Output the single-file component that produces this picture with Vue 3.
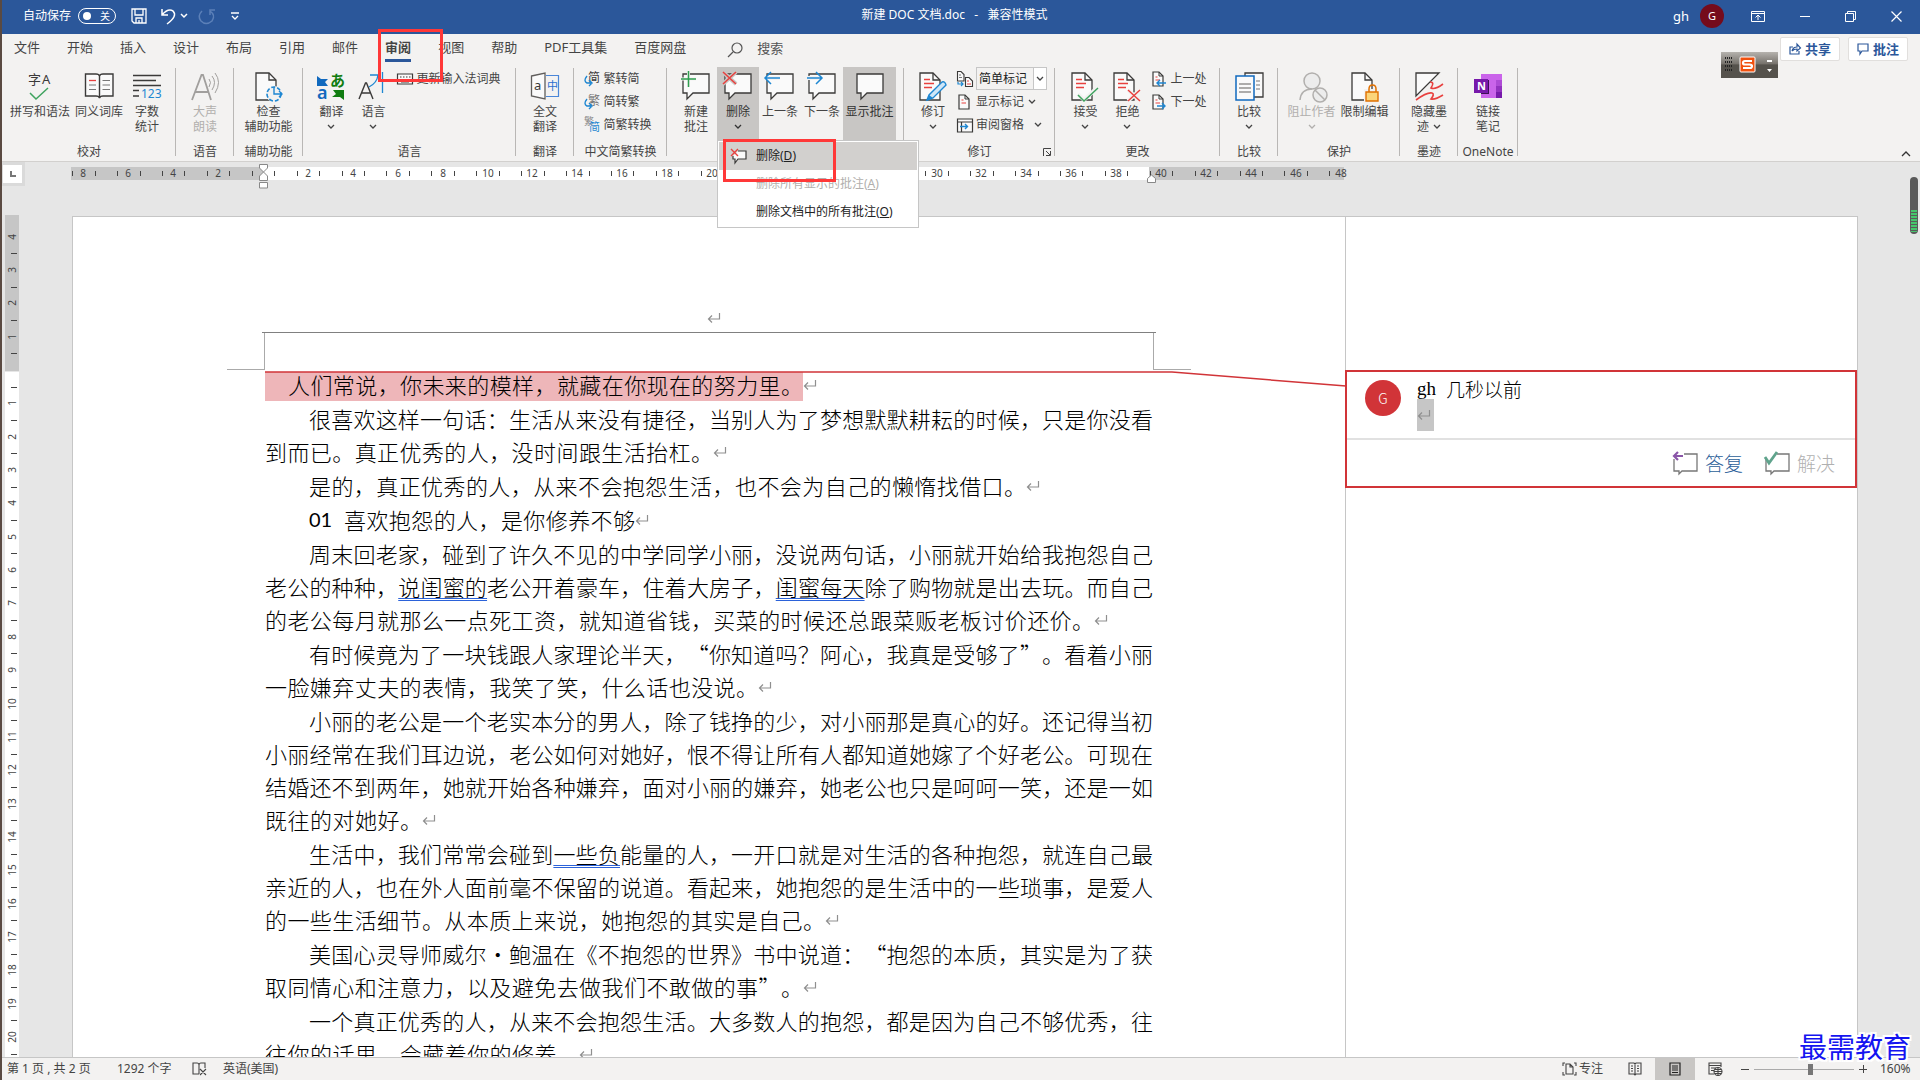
<script setup>
import { ref } from 'vue'

const tabs = ['文件', '开始', '插入', '设计', '布局', '引用', '邮件', '审阅', '视图', '帮助', 'PDF工具集', '百度网盘']
const activeTab = ref('审阅')
const markup = ref('简单标记')
const zoom = ref(57)

const bubble = '<path d="M1 2H27V21H11L5 27V21H1Z" fill="#fafafa" stroke="#3b3a39" stroke-width="1.3"/>'
const sheet = '<path d="M1 1H14L21 8V28H1Z" fill="#fafafa" stroke="#3b3a39" stroke-width="1.3"/><path d="M14 1V8H21" fill="none" stroke="#3b3a39" stroke-width="1.3"/>'
const redLines = '<path d="M5 7.500H11M5 11.500H15M5 15.500H13" stroke="#e8413f" stroke-width="1.3"/>'
const miniSheet = '<path d="M2 1H8L12 5V15H2Z" fill="#fafafa" stroke="#3b3a39" stroke-width="1.2"/><path d="M8 1V5H12" fill="none" stroke="#3b3a39"/><path d="M4.500 6H6.500M4.500 9H9" stroke="#e8413f" stroke-width="1.2"/>'

const icons = {
  spell: '<text x="2" y="12" font-size="13" fill="#3b3a39">字</text><text x="16" y="12" font-size="13" fill="#3b3a39">A</text><path d="M4 21L10 27L22 16" fill="none" stroke="#3fa35f" stroke-width="1.5"/>',
  book: '<path d="M0.500 2H11Q14 2 14.500 4Q15 2 18 2H28V24H18Q15 24 14.500 26Q14 24 11 24H0.500ZM14.500 4V25" fill="#fafafa" stroke="#3b3a39" stroke-width="1.4"/><path d="M17.500 8.500H25M17.500 13H25M17.500 17.500H25M4 13H11M4 17.500H11" stroke="#777"/><path d="M4 8.500H11" stroke="#e8413f" stroke-width="1.3"/>',
  count: '<path d="M0 3.500H28M0 8.500H23M0 13.500H28M0 18.500H6M0 24H6" stroke="#3b3a39" stroke-width="1.3"/><text x="8" y="26" font-size="12" fill="#1e87d2">123</text>',
  speak: '<path d="M1 28L10.500 3H12L20 28M4 20H17.500" fill="none" stroke="#a19f9d" stroke-width="1.8"/><path d="M18 7Q21 10 18 15M21 4Q26 10 21 18M24 1Q31 10 24 21" fill="none" stroke="#a19f9d"/>',
  access: sheet + '<circle cx="19" cy="22" r="8" fill="#f3f2f1"/><circle cx="19" cy="22" r="7" fill="none" stroke="#1e87d2" stroke-width="1.6" stroke-dasharray="4 2"/><path d="M19 15V22H27M24 19L27 22L24 25" fill="none" stroke="#1e87d2" stroke-width="1.4"/>',
  translate: '<path d="M0 4L4 7H11L8 10L11 14H0Z" fill="#1069be"/><text x="13" y="14" font-size="15" font-weight="700" fill="#107c10">あ</text><text x="0" y="27" font-size="18" font-weight="600" fill="#1069be">a</text><path d="M16 18H27V28L23 25H15L19 22Z" fill="#107c10"/>',
  lang: '<path d="M0 27L6.500 11H7.500L14 27M2.500 21H11.500" fill="none" stroke="#3b3a39" stroke-width="1.4"/><path d="M11 3H19Q18 11 10 15M23.500 0V21M23.500 9H27" fill="none" stroke="#1e87d2" stroke-width="1.3"/>',
  fulltrans: '<path d="M0.500 4L14 1V27L0.500 24Z" fill="#fafafa" stroke="#605e5c" stroke-width="1.3"/><path d="M15 3.500H27.500V24.500H15" fill="none" stroke="#4a86d8" stroke-width="1.2"/><text x="3" y="18" font-size="13" fill="#3b3a39">a</text><text x="16" y="18" font-size="11" fill="#2b6fd0">中</text>',
  newC: bubble + '<path d="M-1 7H14M6.500 0V15" stroke="#f3f2f1" stroke-width="3"/><path d="M-1 7H14M6.500 -1V15" stroke="#2e9e4f" stroke-width="1.5"/>',
  delC: bubble + '<path d="M-1 0L12 12M12 0L-1 12" stroke="#c8c6c4" stroke-width="4"/><path d="M-1 0L12 12M12 0L-1 12" stroke="#e8413f" stroke-width="1.6"/>',
  prevC: bubble + '<path d="M-1 6H14" stroke="#f3f2f1" stroke-width="4"/><path d="M14 6H-1M5 0L-1 6L5 12" fill="none" stroke="#1e87d2" stroke-width="1.5"/>',
  nextC: bubble + '<path d="M-1 6H14" stroke="#f3f2f1" stroke-width="4"/><path d="M-1 6H14M8 0L14 6L8 12" fill="none" stroke="#1e87d2" stroke-width="1.5"/>',
  showC: bubble,
  track: sheet + redLines + '<path d="M8 28L10 23L23 10Q26 9 27 13L14 26Z" fill="#cfe6f7" stroke="#1e87d2" stroke-width="1.4"/><path d="M8 29L10 23L14 26Z" fill="#1e87d2"/>',
  accept: sheet + redLines + '<path d="M7 22L13 28L27 15" fill="none" stroke="#f3f2f1" stroke-width="4"/><path d="M7 23L13 29L27 16" fill="none" stroke="#3fa35f" stroke-width="1.5"/>',
  reject: sheet + redLines + '<path d="M15 18L27 29M27 18L15 29" stroke="#f3f2f1" stroke-width="4"/><path d="M15 18L27 29M27 18L15 29" stroke="#e8413f" stroke-width="1.5"/>',
  compare: '<path d="M10 1H28V25H10Z" fill="#fafafa" stroke="#3b3a39" stroke-width="1.3"/><path d="M21 9H25M21 13H25M21 17H25" stroke="#777"/><path d="M1 4H19V28H1Z" fill="#fafafa" stroke="#1069be" stroke-width="1.5"/><path d="M4 12H16M4 16H16M4 20H16" stroke="#605e5c" stroke-width="1.2"/>',
  block: '<circle cx="14" cy="9" r="8" fill="#ececec" stroke="#b1afad" stroke-width="1.5"/><path d="M2 28Q3 17 14 17" fill="none" stroke="#b1afad" stroke-width="1.5"/><circle cx="22" cy="23" r="7" fill="#ececec" stroke="#b1afad" stroke-width="1.5"/><path d="M17 18L27 28" stroke="#b1afad" stroke-width="1.5"/>',
  lock: sheet + '<path d="M13 17H30V31H13Z" fill="#f3f2f1"/><path d="M18 20V17Q18 13 21.500 13Q25 13 25 17V20" fill="none" stroke="#e07000" stroke-width="1.5"/><path d="M15 20H27V29H15Z" fill="#fbd57a" stroke="#e07000" stroke-width="1.4"/>',
  ink: '<path d="M1 1H24L1 24Z" fill="#fafafa" stroke="#3b3a39" stroke-width="1.3"/><path d="M1 28Q12 20 17 21Q20 22 16 27Q20 28 28 23M15 10Q20 10 16 16Q20 18 28 12" fill="none" stroke="#e8413f" stroke-width="1.6"/>',
  onenote: '<path d="M7 2H28V26H7Z" fill="#ca64ea"/><path d="M22 8H28V14H22Z" fill="#ae4bd5"/><path d="M22 14H28V20H22Z" fill="#9332bf"/><path d="M22 20H28V26H22Z" fill="#7719aa"/><path d="M1 8H15V22H7V21H1Z" fill="#3d1056"/><rect y="7" width="14" height="14" fill="#7719aa"/><text x="3" y="18" font-size="11" font-weight="700" fill="#fff">N</text>',
  keyboard: '<path d="M0.500 3H15.500V13H0.500Z" fill="#fafafa" stroke="#3b3a39" stroke-width="1.2"/><path d="M3 6H14M3 8.500H14" stroke="#3b3a39" stroke-dasharray="1.500 1.500"/><path d="M4 11H12" stroke="#3b3a39"/>',
  toSimp: '<text x="4" y="11" font-size="12" fill="#3b3a39">简</text><path d="M3 5Q-1 10 3 12H7M5 9L8 12L5 15" fill="none" stroke="#1e87d2" stroke-width="1.4"/>',
  toTrad: '<text x="4" y="11" font-size="12" fill="#777">繁</text><path d="M3 5Q-1 10 3 12H7M5 9L8 12L5 15" fill="none" stroke="#1e87d2" stroke-width="1.4"/>',
  simpTrad: '<text x="0" y="8" font-size="10" fill="#888">繁</text><text x="5" y="14" font-size="11" fill="#1e87d2">简</text>',
  markup: '<path d="M0.500 0.500H4L7 3.500V10H0.500Z" fill="#fafafa" stroke="#3b3a39" stroke-width="1.1"/><path d="M8.500 6.500H12L15.500 10V15.500H8.500Z" fill="#fafafa" stroke="#3b3a39" stroke-width="1.1"/><path d="M10 10H12M10 13H14" stroke="#e8413f"/><path d="M2 4H4M2 6.500H5" stroke="#777"/><path d="M1 11V13H6M4 11L6 13L4 15" fill="none" stroke="#1e87d2" stroke-width="1.2"/>',
  showMark: miniSheet,
  pane: '<path d="M0.500 2H15.500V15H0.500ZM0.500 5H15.500M4.500 5V15" fill="#fafafa" stroke="#3b3a39" stroke-width="1.2"/><path d="M3 9.500H10M8 7L10.500 9.500L8 12" fill="none" stroke="#1e87d2" stroke-width="1.4"/>',
  prevChange: miniSheet + '<path d="M15 12H6M9 9L6 12L9 15" fill="none" stroke="#1e87d2" stroke-width="1.4"/>',
  nextChange: miniSheet + '<path d="M6 12H14M11 9L14 12L11 15" fill="none" stroke="#1e87d2" stroke-width="1.4"/>',
}

const big = (icon, l1, l2, w, extra = {}) => ({ icon, l1, l2, w, ...extra })
const groups = [
  { label: '校对', w: 174, shift: 2, items: [big('spell', '拼写和语法', '', 66), big('book', '同义词库', '', 52), big('count', '字数', '统计', 44)] },
  { label: '语音', w: 58, items: [big('speak', '大声', '朗读', 42, { off: true })] },
  { label: '辅助功能', w: 69, items: [big('access', '检查', '辅助功能', 52)] },
  { label: '语言', w: 213, shift: 8, items: [big('translate', '翻译', '', 42, { chev: true }), big('lang', '语言', '', 42, { chev: true }), { rows: [{ icon: 'keyboard', text: '更新输入法词典' }] }] },
  { label: '翻译', w: 58, items: [big('fulltrans', '全文', '翻译', 42)] },
  { label: '中文简繁转换', w: 93, shift: 8, items: [{ rows: [{ icon: 'toSimp', text: '繁转简' }, { icon: 'toTrad', text: '简转繁' }, { icon: 'simpTrad', text: '简繁转换' }] }] },
  { label: '', w: 237, items: [big('newC', '新建', '批注', 42), big('delC', '删除', '', 42, { chev: true, active: true, menu: true }), big('prevC', '上一条', '', 42), big('nextC', '下一条', '', 42), big('showC', '显示批注', '', 53, { active: true })] },
  { label: '修订', w: 151, launcher: true, items: [big('track', '修订', '', 42, { chev: true }), { rows: [{ icon: 'markup', select: true }, { icon: 'showMark', text: '显示标记', chev: true }, { icon: 'pane', text: '审阅窗格', chev: true, far: true }] }] },
  { label: '更改', w: 165, shift: 4, items: [big('accept', '接受', '', 42, { chev: true }), big('reject', '拒绝', '', 42, { chev: true }), { rows: [{ icon: 'prevChange', text: '上一处' }, { icon: 'nextChange', text: '下一处' }] }] },
  { label: '比较', w: 58, items: [big('compare', '比较', '', 42, { chev: true })] },
  { label: '保护', w: 122, shift: 2, items: [big('block', '阻止作者', '', 53, { chev: true, off: true }), big('lock', '限制编辑', '', 53)] },
  { label: '墨迹', w: 58, items: [big('ink', '隐藏墨', '迹', 42, { chev: true })] },
  { label: 'OneNote', w: 60, items: [big('onenote', '链接', '笔记', 42)] },
]

const menu = [
  { text: '删除', key: 'D', hot: true },
  { text: '删除所有显示的批注', key: 'A', off: true },
  { text: '删除文档中的所有批注', key: 'O' },
]

// Horizontal ruler: 40 character units span 898px, zero sits 192px in.
const hPos = n => 192 + Math.round((n * 898) / 40)
const hNumbers = []
for (let n = -8; n <= 48; n += 2) if (n) hNumbers.push({ n: Math.abs(n), x: hPos(n) })
const hTicks = []
for (let n = -8.5; n < 48; n++) hTicks.push(hPos(n))

const vPos = n => 155 + Math.round((n * 667) / 20)
const vNumbers = []
for (let n = -4; n <= 20; n++) if (n) vNumbers.push({ n: Math.abs(n), y: vPos(n) })
const vTicks = []
for (let n = -3.5; n < 21; n++) vTicks.push(vPos(n))

// Square brackets enclose the phrases flagged by the grammar checker.
const paragraphs = [
  ['很喜欢这样一句话：生活从来没有捷径，当别人为了梦想默默耕耘的时候，只是你没看', '到而已。真正优秀的人，没时间跟生活抬杠。'],
  ['是的，真正优秀的人，从来不会抱怨生活，也不会为自己的懒惰找借口。'],
  ['喜欢抱怨的人，是你修养不够'],
  ['周末回老家，碰到了许久不见的中学同学小丽，没说两句话，小丽就开始给我抱怨自己', '老公的种种，[说闺蜜的]老公开着豪车，住着大房子，[闺蜜每天]除了购物就是出去玩。而自己', '的老公每月就那么一点死工资，就知道省钱，买菜的时候还总跟菜贩老板讨价还价。'],
  ['有时候竟为了一块钱跟人家理论半天，“你知道吗？阿心，我真是受够了”。看着小丽', '一脸嫌弃丈夫的表情，我笑了笑，什么话也没说。'],
  ['小丽的老公是一个老实本分的男人，除了钱挣的少，对小丽那是真心的好。还记得当初', '小丽经常在我们耳边说，老公如何对她好，恨不得让所有人都知道她嫁了个好老公。可现在', '结婚还不到两年，她就开始各种嫌弃，面对小丽的嫌弃，她老公也只是呵呵一笑，还是一如', '既往的对她好。'],
  ['生活中，我们常常会碰到[一些负]能量的人，一开口就是对生活的各种抱怨，就连自己最', '亲近的人，也在外人面前毫不保留的说道。看起来，她抱怨的是生活中的一些琐事，是爱人', '的一些生活细节。从本质上来说，她抱怨的其实是自己。'],
  ['美国心灵导师威尔·鲍温在《不抱怨的世界》书中说道：“抱怨的本质，其实是为了获', '取同情心和注意力，以及避免去做我们不敢做的事”。'],
  ['一个真正优秀的人，从来不会抱怨生活。大多数人的抱怨，都是因为自己不够优秀，往', '往你的话里，会藏着你的修养。'],
].map((lines, p) => lines.map((text, i) => {
  const parts = text.split(/[[\]]/).map((t, k) => ({ t, flag: k % 2 === 1 }))
  const chars = text.replace(/[[\]]/g, '').length
  const last = i === lines.length - 1
  return { parts, last, indent: i === 0, number: p === 2, width: last ? Math.round(chars * 22.4) + 'px' : null }
}))
</script>

<template>
  <div class="app" lang="zh-CN">
    <header class="titlebar">
      <div class="quick">
        <label for="autosave">自动保存</label>
        <button id="autosave" class="toggle" role="switch" aria-checked="false"><i></i>关</button>
        <button class="qa save" aria-label="保存"><svg width="16" height="16" fill="none" stroke="#fff" stroke-width="1.300"><path d="M1 1H15V15H3L1 13ZM4 1V7H12V1M5 15V10H11V15M8 12V15" /></svg></button>
        <button class="qa undo" aria-label="撤消"><svg width="26" height="17" fill="none" stroke="#fff" stroke-width="1.500"><path d="M1 1V7H7M1 7Q7 0 12 3Q17 8 6 16M20 6L23 9L26 6" /></svg></button>
        <button class="qa redo" aria-label="重做"><svg width="17" height="17" fill="none" stroke="#5c80b8" stroke-width="1.500"><path d="M4 3Q-1 8 3 13Q8 18 14 13Q18 7 12 3M12 7V2H17" /></svg></button>
        <button class="qa" aria-label="自定义"><svg width="8" height="8" fill="none" stroke="#fff" stroke-width="1.300"><path d="M0 1H8M1 4L4 7L7 4" /></svg></button>
      </div>
      <h1>新建 DOC 文档.doc&nbsp;&nbsp; -&nbsp;&nbsp; 兼容性模式</h1>
      <div class="window">
        <span class="user">gh</span><span class="face">G</span>
        <button aria-label="功能区显示选项"><svg width="14" height="11" fill="none" stroke="#fff"><path d="M0.500 0.500H13.500V10.500H0.500ZM0.500 2.500H13.500M7 9V4M4.500 6.500L7 4L9.500 6.500" /></svg></button>
        <button aria-label="最小化"><svg width="10" height="11" stroke="#fff"><path d="M0 5.500H10" /></svg></button>
        <button aria-label="还原"><svg width="11" height="11" fill="none" stroke="#fff"><path d="M0.500 2.500H8.500V10.500H0.500ZM2.500 2.500V0.500H10.500V8.500H8.500" /></svg></button>
        <button aria-label="关闭"><svg width="11" height="11" stroke="#fff" stroke-width="1.200"><path d="M0.500 0.500L10.500 10.500M10.500 0.500L0.500 10.500" /></svg></button>
      </div>
    </header>

    <nav class="tabs">
      <button v-for="t in tabs" :key="t" :class="{ current: t === activeTab }" @click="activeTab = t">{{ t }}</button>
      <label class="search" for="find"><svg width="15" height="16" fill="none" stroke="#555" stroke-width="1.200"><circle cx="9" cy="6" r="5" /><path d="M5 10L0 15" /></svg></label>
      <input id="find" class="find" placeholder="搜索" aria-label="搜索" />
      <div class="share">
        <button><svg width="12" height="12" fill="none" stroke="#2b579a" stroke-width="1.200"><path d="M4 4H1V11H10V8M3 8Q4 4 8 4V1L11.500 5L8 8V6Q5 6 3 8" /></svg>共享</button>
        <button><svg width="12" height="12" fill="none" stroke="#2b579a" stroke-width="1.200"><path d="M1 1H11V8H5L3 11V8H1Z" /></svg>批注</button>
      </div>
      <div class="ime" aria-hidden="true">
        <svg width="57" height="26"><g fill="#222"><rect v-for="n in 16" :key="n" :x="4 + ((n - 1) % 4) * 2" :y="5 + Math.floor((n - 1) / 4) * 4" width="1" height="2" /></g>
          <rect x="19" y="5" width="15" height="15" rx="1" fill="#f1510f" stroke="#fff" /><path d="M31 9H24Q22 9 22 11Q22 12.500 24 12.500H28.500Q31 12.500 31 14Q31 16 29 16H22" fill="none" stroke="#fff" stroke-width="2.200" /><path d="M46 8H51V10H46ZM46 17H51L48.500 20Z" fill="#fff" /></svg>
      </div>
      <div class="mark mark-tab"></div>
    </nav>

    <section class="ribbon">
      <div v-for="(g, gi) in groups" :key="gi" class="group" :style="{ width: g.w + 'px' }">
        <div class="items" :style="{ paddingRight: (g.shift || 0) + 'px' }">
          <template v-for="(it, k) in g.items" :key="k">
            <div v-if="it.rows" class="col">
              <div v-for="r in it.rows" :key="r.icon" class="row">
                <svg class="small" viewBox="0 0 16 16" v-html="icons[r.icon]"></svg>
                <span v-if="r.select" class="combo">
                  <select v-model="markup" aria-label="标记显示方式"><option>简单标记</option><option>所有标记</option></select>
                  <svg class="chev" viewBox="0 0 8 6"><path d="M1 1L4 4L7 1" /></svg>
                </span>
                <button v-else :class="{ far: r.far }">{{ r.text }}<svg v-if="r.chev" class="chev" viewBox="0 0 8 6"><path d="M1 1L4 4L7 1" /></svg></button>
              </div>
            </div>
            <div v-else class="slot" :style="{ width: it.w + 'px' }">
              <button class="big" :class="{ active: it.active, off: it.off }" :disabled="it.off">
                <svg class="large" viewBox="0 0 28 28" v-html="icons[it.icon]"></svg>
                <span>{{ it.l1 }}</span>
                <span class="second">{{ it.l2 }}<svg v-if="it.chev" class="chev" viewBox="0 0 8 6"><path d="M1 1L4 4L7 1" /></svg></span>
              </button>
              <div v-if="it.menu" class="menu" role="menu">
                <button v-for="m in menu" :key="m.key" role="menuitem" :disabled="m.off" :class="{ hot: m.hot }">
                  <svg class="small" viewBox="0 0 16 16"><path v-if="m.hot" d="M7 3H15V11H7L4 15V11H2V8" fill="#fafafa" stroke="#3b3a39" stroke-width="1.200" /><path v-if="m.hot" d="M0 1L7 8M7 1L0 8" stroke="#e8413f" stroke-width="1.400" /></svg>
                  <span>{{ m.text }}(<u>{{ m.key }}</u>)</span>
                </button>
                <div class="mark mark-menu"></div>
              </div>
            </div>
          </template>
        </div>
        <div class="caption">{{ g.label }}</div>
        <button v-if="g.launcher" class="launcher" aria-label="修订选项"><svg width="8" height="8" fill="none" stroke="#444"><path d="M0.500 8V0.500H8M3 3L7 7M7.500 3V7.500H3" /></svg></button>
      </div>
      <button class="collapse" aria-label="折叠功能区"><svg width="10" height="6" fill="none" stroke="#333" stroke-width="1.300"><path d="M1 5L5 1L9 5" /></svg></button>
    </section>

    <main class="workspace">
      <div class="ruler-row">
        <div class="tabstop"><svg width="6" height="6"><path d="M1 0V5H6" fill="none" stroke="#777" stroke-width="2" /></svg></div>
        <svg class="hruler" width="1273" height="24">
          <rect y="5" width="1273" height="13" fill="#c6c6c6" /><rect x="192" y="5" width="886" height="13" fill="#fff" />
          <path v-for="x in hTicks" :key="x" :d="`M${x + 0.5} 9V14`" stroke="#444" />
          <text v-for="m in hNumbers" :key="m.x" :x="m.x" y="15">{{ m.n }}</text>
          <path d="M188.500 2.500H196.500V6L192.500 10L188.500 6ZM188.500 18.500V14L192.500 10L196.500 14V18.500ZM188.500 20.500H196.500V26H188.500Z" fill="#fff" stroke="#888" />
          <path d="M1076.500 20.500V16.500L1080.500 13L1084.500 16.500V20.500Z" fill="#fff" stroke="#888" />
        </svg>
      </div>
      <div class="desk">
        <svg class="vruler" width="14" height="860">
          <rect width="14" height="156" fill="#c6c6c6" /><rect y="157" width="14" height="703" fill="#fff" />
          <path v-for="y in vTicks" :key="y" :d="`M6 ${y + 0.5}H12`" stroke="#444" />
          <text v-for="m in vNumbers" :key="m.y" x="0" y="0" :transform="`translate(11 ${m.y}) rotate(-90)`">{{ m.n }}</text>
        </svg>
        <article class="page">
          <div class="sheet">
            <div class="head"><svg class="ret" viewBox="0 0 14 12"><path d="M12.500 1V7H2M5 3.500L1.500 7L5 10.500" /></svg></div>
            <div class="corners"><i></i><i></i></div>
            <div class="text">
              <p><span class="picked"><span class="run">人们常说，你未来的模样，就藏在你现在的努力里。</span></span><svg class="ret" viewBox="0 0 14 12"><path d="M12.500 1V7H2M5 3.500L1.500 7L5 10.500" /></svg></p>
              <p v-for="(lines, pi) in paragraphs" :key="pi">
                <span v-for="(l, li) in lines" :key="li" class="line" :class="{ indent: l.indent }">
                  <span v-if="l.number" class="num">01</span>
                  <span class="run" :class="{ full: !l.last }" :style="{ width: l.width }"><template v-for="(s, k) in l.parts" :key="k"><span v-if="s.flag" class="flag">{{ s.t }}</span><template v-else>{{ s.t }}</template></template></span>
                  <svg v-if="l.last" class="ret" viewBox="0 0 14 12"><path d="M12.500 1V7H2M5 3.500L1.500 7L5 10.500" /></svg>
                </span>
              </p>
            </div>
            <svg class="wire" width="1081" height="16"><path d="M0 1H907L1081 15" fill="none" stroke="#d13438" stroke-width="1.500" /></svg>
          </div>
          <aside class="notes">
            <section class="note">
              <div class="note-body">
                <span class="avatar">G</span>
                <div><div class="who"><b>gh</b><span>几秒以前</span></div><span class="caret"><svg class="ret" viewBox="0 0 14 12"><path d="M12.500 1V7H2M5 3.500L1.500 7L5 10.500" /></svg></span></div>
              </div>
              <div class="note-actions">
                <button class="reply"><svg width="26" height="24" fill="none"><path d="M12 3H25V20H10L7 23V20H2V8" stroke="#777" stroke-width="1.300" /><path d="M11 5H2M6 1L2 5L6 9" stroke="#8a55a8" stroke-width="2.200" /></svg>答复</button>
                <button class="solve"><svg width="26" height="24" fill="none"><path d="M13 3H25V20H10L7 23V20H2V8" stroke="#777" stroke-width="1.300" /><path d="M1 6L5 12L13 1" stroke="#5fa38c" stroke-width="2.800" /></svg>解决</button>
              </div>
            </section>
          </aside>
        </article>
      </div>
      <div class="meter"></div>
    </main>

    <footer class="status">
      <span class="pages">第 1 页 , 共 2 页</span><span class="words">1292 个字</span>
      <svg class="proof" width="15" height="14" fill="none" stroke="#444" stroke-width="1.100"><path d="M7 12H1V1H5Q7 1 7 3V12M7 3Q7 1 9 1H13V6M8 7L14 13M14 7L8 13" /></svg>
      <span>英语(美国)</span>
      <div class="views">
        <button class="focus"><svg width="15" height="14" fill="none" stroke="#444" stroke-width="1.100"><path d="M3 1H1V4M1 10V13H3M12 1H14V4M14 10V13H12M4 2H8L11 5V12H4ZM8 2V5H11" /></svg>专注</button>
        <button class="view" aria-label="阅读视图"><svg width="14" height="14" fill="none" stroke="#444" stroke-width="1.100"><path d="M1 1H6L7 2L8 1H13V12H8L7 13L6 12H1ZM7 2V13M3 4H5M3 6.500H5M3 9H5M9 4H11M9 6.500H11M9 9H11" /></svg></button>
        <button class="view on" aria-label="页面视图"><svg width="12" height="14" fill="none" stroke="#222" stroke-width="1.200"><path d="M1 1H11V13H1ZM3 4H9M3 6H9M3 8H9M3 10.500H9" /></svg></button>
        <button class="view" aria-label="Web 版式视图"><svg width="15" height="14" fill="none" stroke="#444" stroke-width="1.100"><path d="M6 12H1V1H13V5M1 3.500H13M3 6H8M3 8.500H6" /><circle cx="10" cy="9.500" r="4" /><path d="M6 9.500H14M10 5.500V13.500M7 7.500H13M7 11.500H13" /></svg></button>
        <button class="step" aria-label="缩小"><svg width="8" height="8" stroke="#444"><path d="M0 4.500H8" /></svg></button>
        <input v-model="zoom" type="range" min="0" max="100" aria-label="缩放" />
        <button class="step" aria-label="放大"><svg width="8" height="8" stroke="#444"><path d="M0 4.500H8M4.500 0V8" /></svg></button>
        <span class="percent">160%</span>
      </div>
    </footer>
    <div class="brand">最需教育</div>
  </div>
</template>

<style>
body { margin: 0; }
</style>

<style scoped>
.app { position: relative; display: flex; flex-direction: column; height: 100vh; box-sizing: border-box; border-left: 2px solid #5a4a42; overflow: hidden; background: #e6e6e6; color: #444; font: 12px/16px "Noto Sans", "Noto Sans CJK SC", sans-serif; text-spacing-trim: space-all; }
button { padding: 0; border: 0; background: none; color: inherit; font: inherit; white-space: nowrap; }
svg { flex: none; overflow: visible; }
.chev { width: 8px; height: 6px; fill: none; stroke: currentColor; stroke-width: 1.3; }

.titlebar { display: flex; flex: none; height: 34px; background: #2b579a; color: #fff; }
.quick, .window { display: flex; flex: 1; align-items: center; padding-bottom: 2px; }
.quick { padding-left: 21px; }
.toggle { display: flex; align-items: center; justify-content: space-between; box-sizing: border-box; width: 38px; height: 16px; margin: 0 15px 0 7px; padding: 0 5px 0 4px; border: 1px solid #fff; border-radius: 8px; font-size: 10px; line-height: 14px; }
.toggle i { width: 8px; height: 8px; border-radius: 4px; background: #fff; }
.qa { display: flex; }
.save { margin-right: 14px; }
.undo { margin-right: 11px; }
.redo { margin-right: 16px; }
h1 { margin: 0 16px 0 0; font: inherit; line-height: 30px; }
.window { justify-content: flex-end; padding-right: 18px; }
.window button { display: flex; margin-left: 35px; }
.window .face { width: 24px; margin: 0 -8px 0 11px; border-radius: 12px; background: #750b1c; font-size: 11px; line-height: 24px; text-align: center; }
.user { font-size: 13px; }

.tabs { position: relative; display: flex; flex: none; gap: 27px; height: 32px; padding-left: 12px; background: #f3f2f1; font-size: 13px; }
.tabs > button { height: 28px; border-bottom: 3px solid transparent; box-sizing: border-box; line-height: 27px; }
.tabs > .current { border-color: #2b579a; font-weight: 700; }
.search { display: flex; align-items: center; margin: 0 -13px 0 15px; }
.find { width: 60px; height: 28px; padding: 0; border: 0; background: none; font: inherit; }
.find::placeholder { color: #555; opacity: 1; }
.share { display: flex; gap: 8px; margin: 3px 12px 0 auto; }
.share button { display: flex; align-items: center; justify-content: center; gap: 4px; box-sizing: border-box; width: 60px; height: 24px; border: 1px solid #e1dfdd; border-radius: 2px; background: #fff; color: #2b579a; font-weight: 700; }
.ime { position: absolute; top: 18px; right: 142px; z-index: 2; width: 57px; height: 26px; background: linear-gradient(#b5b2ad, #77736d 45%, #55524c 50%); }
.mark { position: absolute; z-index: 5; box-sizing: border-box; border: 3px solid #ff3838; pointer-events: none; }
.mark-tab { top: -5px; left: 376px; width: 65px; height: 53px; }
.mark-menu { top: -2px; left: 5px; width: 113px; height: 43px; }

.ribbon { position: relative; display: flex; flex: none; height: 95px; border-bottom: 1px solid #d2d0ce; background: #f3f2f1; }
.group { position: relative; display: flex; flex: none; flex-direction: column; box-sizing: border-box; margin-top: 1px; height: 93px; }
.group::after { content: ""; position: absolute; top: 1px; right: 0; bottom: 4px; width: 1px; background: #b9b7b5; }
.items { display: flex; flex: 1; justify-content: center; }
.slot { position: relative; flex: none; }
.big { display: flex; flex-direction: column; align-items: center; width: 100%; height: 74px; padding-top: 5px; line-height: 15px; }
.big.active { background: #c8c6c4; color: #333; }
.big.off { color: #b1afad; }
.large { width: 28px; height: 28px; margin-bottom: 4px; }
.second { display: flex; align-items: center; gap: 4px; height: 15px; }
.col { padding: 0 0 0 3px; }
.row { display: flex; align-items: center; gap: 3px; height: 23px; }
.row button .chev { margin-left: 4px; vertical-align: middle; }
.row .far .chev { margin-left: 10px; }
.small { width: 16px; height: 16px; }
.combo { position: relative; display: flex; align-items: center; }
.combo select { box-sizing: border-box; width: 71px; height: 23px; padding: 0 2px; border: 1px solid #c6c6c6; background: linear-gradient(to right, #f3f2f1 56px, #c6c6c6 56px, #c6c6c6 57px, #fff 57px); appearance: none; color: #222; font: inherit; }
.combo .chev { position: absolute; right: 3px; }
.caption { height: 19px; line-height: 21px; text-align: center; }
.launcher { position: absolute; right: 4px; bottom: 4px; display: flex; }
.collapse { display: flex; align-self: flex-end; margin: 0 9px 4px auto; }
.menu { position: absolute; top: 73px; left: 0; z-index: 4; box-sizing: border-box; width: 202px; padding: 1px; border: 1px solid #c6c6c6; background: #fff; }
.menu button { display: flex; align-items: center; gap: 9px; width: 100%; height: 28px; padding-left: 12px; color: #222; }
.menu button:disabled { color: #b1afad; }
.menu .hot { background: #d2d0ce; }

.workspace { position: relative; display: flex; flex: 1; flex-direction: column; min-height: 0; overflow: hidden; }
.ruler-row { display: flex; flex: none; height: 53px; }
.tabstop { display: flex; align-items: center; justify-content: center; flex: none; box-sizing: border-box; width: 23px; height: 24px; margin-right: 46px; border: solid #dadada; border-width: 3px 3px 3px 1px; background: #fff; }
.hruler, .vruler { font: 10px "Noto Sans", sans-serif; fill: #444; text-anchor: middle; }
.desk { display: flex; flex: 1; min-height: 0; padding-left: 3px; }
.page { display: flex; flex: 1; margin: 1px 62px 0 53px; border: solid #c6c6c6; border-width: 1px 1px 0; background: #fff; }
.sheet { position: relative; flex: none; width: 1272px; box-sizing: border-box; padding: 0 192px; color: #000; }
.head { display: flex; align-items: flex-end; justify-content: center; height: 116px; margin: 0 -3px; padding: 0 0 0 10px; border-bottom: 1px solid #808080; box-sizing: border-box; }
.head .ret { margin-bottom: 8px; }
.corners { display: flex; justify-content: space-between; height: 35px; margin: 0 -38px; }
.corners i { flex: none; box-sizing: border-box; width: 38px; height: 37px; border: 0 solid #aaa; border-width: 0 1px 1px 0; }
.corners i + i { border-width: 0 0 1px 1px; }
.ret { width: 14px; height: 12px; fill: none; stroke: #8f8f8f; stroke-width: 1.2; }
.text { font: 300 22px/33px "Noto Sans CJK SC", sans-serif; }
.text p { display: flex; flex-direction: column; margin: 0 0 1px; }
.text p:first-child { flex-direction: row; align-items: center; height: 33px; }
.picked { align-self: flex-end; width: 538px; height: 29px; box-sizing: border-box; padding-left: 23px; background: #eeb6b9; line-height: 25px; }
.line { display: flex; align-items: center; height: 33px; }
.indent { padding-left: 44px; }
.run { display: block; flex: none; text-align: justify; text-align-last: justify; white-space: nowrap; }
.full { flex: 1; }
.num { width: 35px; font: 20px/33px Lato, sans-serif; }
.flag { text-decoration: underline double #2b62d9 1px; text-underline-offset: 2px; text-decoration-skip-ink: none; }
.wire { position: absolute; top: 154px; right: -1px; }
.notes { flex: 1; border-left: 1px solid #c6c6c6; padding-top: 153px; }
.note { margin-left: -1px; border: 2px solid #d13438; color: #000; font: 300 19px/24px "Noto Sans CJK SC", sans-serif; }
.note-body { display: flex; gap: 16px; height: 66px; padding-left: 18px; border-bottom: 2px solid #e1e1e1; }
.avatar { width: 36px; height: 36px; margin-top: 8px; border-radius: 18px; background: #d13438; color: #fff; font-size: 14px; line-height: 36px; text-align: center; }
.who { display: flex; gap: 10px; height: 27px; padding-top: 5px; box-sizing: border-box; }
.who b { font-family: "Liberation Serif", serif; }
.caret { display: flex; align-items: center; width: 17px; height: 32px; background: #c6c6c6; }
.note-actions { display: flex; justify-content: flex-end; align-items: center; gap: 21px; height: 46px; padding-right: 20px; }
.note-actions button { display: flex; align-items: center; gap: 7px; }
.reply { color: #2b6099; }
.note-actions .solve { color: #b0b0b0; }
.meter { position: absolute; top: 15px; right: 2px; width: 8px; height: 57px; border-radius: 4px; background: repeating-linear-gradient(#5a5a5a 0 1px, #46c56c 1px 3px) 1px 32px / 6px 23px no-repeat #5a5a5a; }

.status { display: flex; flex: none; align-items: center; height: 22px; padding-left: 5px; border-top: 1px solid #c6c6c6; background: #f3f2f1; }
.pages { width: 110px; }
.words { width: 75px; }
.proof { margin-right: 16px; }
.views { display: flex; align-items: center; height: 100%; margin-left: auto; }
.focus { display: flex; align-items: center; gap: 2px; margin-right: 12px; }
.view { display: flex; align-items: center; justify-content: center; width: 40px; height: 22px; }
.on { background: #c8c6c4; }
.step { display: flex; }
.view + .step { margin-left: 6px; }
.views input { width: 100px; height: 12px; margin: 0 5px; appearance: none; background: linear-gradient(#aaa, #aaa) center / 100% 1px no-repeat; }
.views input::-webkit-slider-thumb { width: 5px; height: 11px; appearance: none; background: #777; }
.percent { width: 53px; padding-left: 13px; box-sizing: border-box; }
.brand { position: absolute; right: 9px; bottom: 16px; z-index: 6; color: #1414f0; font: 400 28px/36px "Noto Sans CJK SC", sans-serif; text-shadow: 2px 0 #fff, -2px 0 #fff, 0 2px #fff, 0 -2px #fff, 2px 2px #fff, -2px -2px #fff, 2px -2px #fff, -2px 2px #fff; }
</style>
